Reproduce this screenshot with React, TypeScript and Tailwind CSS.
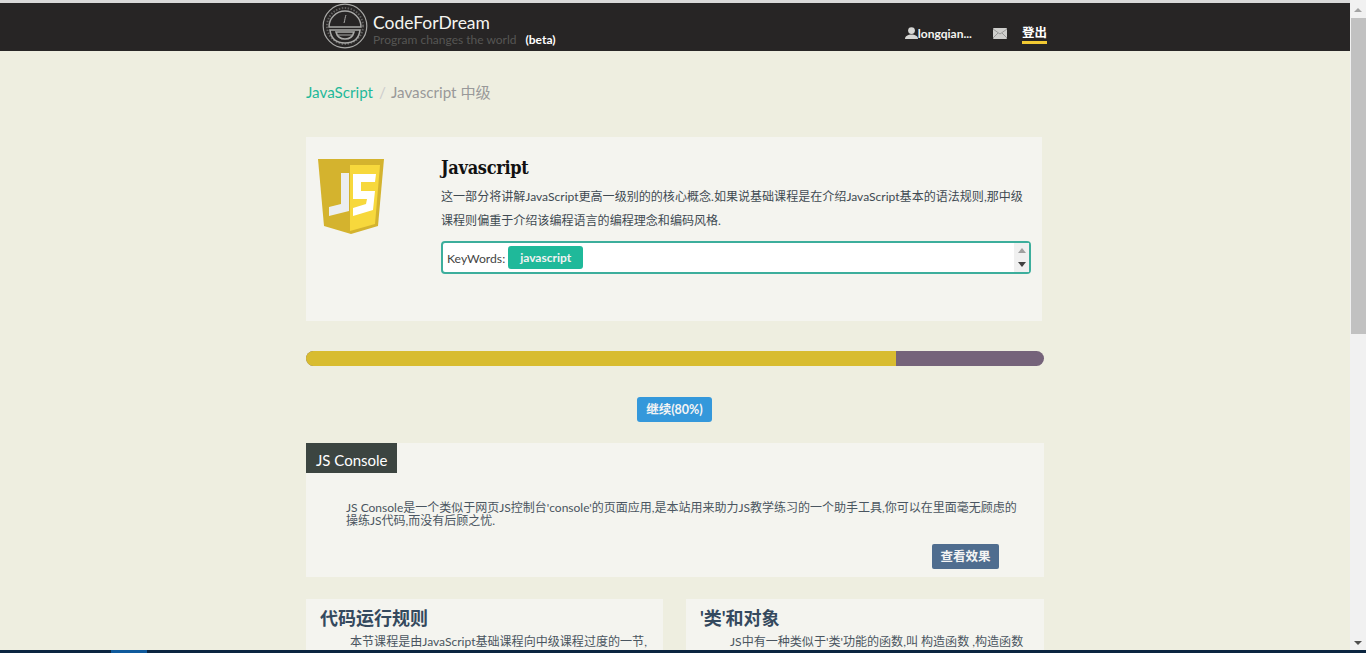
const bodyFont = { fontFamily: "Lato, 'Noto Sans CJK SC', sans-serif" };

function Logo() {
  return (
    <svg width="46" height="46" viewBox="0 0 46 46" fill="none" stroke="#a9a9a7">
      <circle cx="23" cy="23" r="21.8" strokeWidth="1.2" />
      <circle cx="23" cy="23" r="18" strokeWidth="2" strokeDasharray="1.5 1.5" opacity="0.45" />
      <path d="M7 24a16 16 0 0 1 32 0z" strokeWidth="1.4" />
      <path d="M8 27h30c-1 9-7 13-15 13S9 36 8 27z" strokeWidth="1.6" />
      <path d="M14 29h18c-1 4-4 7-9 7s-8-3-9-7z" strokeWidth="1.6" />
      <path d="M16 32h14" strokeWidth="1" />
      <path d="M24 12c-1 2-1 5-2 8" strokeWidth="1" />
    </svg>
  );
}

function JsLogo() {
  return (
    <svg width="66" height="75" viewBox="0 0 66 75">
      <path d="M0 0h66l-6 67-27 8-27-8z" fill="#d4b32e" />
      <path d="M32 6h30l-5 59-25 7z" fill="#f7d83c" />
      <path d="M23 14h8v38l-20 5v-9l12-3z" fill="#eceef0" />
      <path d="M35 15h23l-1 8H43v9h14l-2 19-20 6v-8l13-4 1-5H35z" fill="#fff" />
    </svg>
  );
}

function UserIcon() {
  return (
    <svg width="13" height="12" viewBox="0 0 13 12" fill="#d6d6d4">
      <circle cx="6.5" cy="3.6" r="3.4" />
      <path d="M0 12c0-3 3-4.500 6.500-4.500S13 9 13 12z" />
    </svg>
  );
}

function MailIcon() {
  return (
    <svg width="14" height="11" viewBox="0 0 14 11">
      <rect width="14" height="11" rx="1" fill="#cfcfcd" />
      <path d="M0 1l7 5 7-5M0 10l5-5M14 10L9 5" fill="none" stroke="#8c8c8a" strokeWidth="0.8" />
    </svg>
  );
}

function Header() {
  return (
    <header className="h-[51px] border-t-[3px] border-[#d9d9d9] bg-[#272525]">
      <div className="ml-[322px] flex h-full w-[725px] items-start">
        <Logo />
        <div className="ml-[5px] pt-[8px]">
          <div className="text-[17.5px] leading-[24px] text-[#f4f4f0]">CodeForDream</div>
          <div className="-mt-[3px] flex text-[12px] leading-[15px] text-[#565654]">
            Program changes the world
            <span className="ml-[9px] font-bold text-white">(beta)</span>
          </div>
        </div>
        <nav className="ml-auto flex items-center pt-[21px] text-[12px] font-bold leading-[18px] text-white">
          <span className="-mt-[3px]"><UserIcon /></span>
          <span className="text-[#f4f4f0]">longqian...</span>
          <span className="ml-[21px] -mt-[2px]"><MailIcon /></span>
          <span className="ml-[15px] border-b-[3px] border-[#f1c933] text-[12.500px] leading-[17px]">登出</span>
        </nav>
      </div>
    </header>
  );
}

function KeywordBox() {
  return (
    <div className="mt-[8px] flex h-[33px] w-[590px] items-center justify-between rounded-[4px] border-2 border-[#3cae9c] bg-white pl-1">
      <div className="flex items-center text-[12.200px] text-[#444]">
        <span className="pt-[3px]">KeyWords:</span>
        <span className="ml-[3px] flex h-[23px] w-[75px] items-center justify-center rounded-[3px] bg-[#1fb99a] text-[12px] font-bold text-[#f2f2f2]">
          javascript
        </span>
      </div>
      <div className="flex h-full w-[15px] flex-col items-center justify-between bg-[#f0f0f0] py-[5px]">
        <span className="h-0 w-0 border-x-[4px] border-b-[5px] border-x-transparent border-b-[#a0a0a0]" />
        <span className="h-0 w-0 border-x-[4px] border-t-[5px] border-x-transparent border-t-[#404040]" />
      </div>
    </div>
  );
}

function IntroCard() {
  return (
    <section className="flex h-[184px] w-[736px] bg-[#f4f4ef] pl-[12px] pt-[22px]">
      <JsLogo />
      <div className="ml-[57px]">
        <h1 className="pt-px text-[18px] font-bold leading-[16px] tracking-[-0.300px] text-[#111] font-stretch-condensed" style={{ fontFamily: "'DejaVu Serif', serif" }}>
          Javascript
        </h1>
        <p className="mt-[9px] w-[590px] text-[12.060px] leading-[24px] text-[#3f4a52]">
          这一部分将讲解JavaScript更高一级别的的核心概念.如果说基础课程是在介绍JavaScript基本的语法规则,那中级课程则偏重于介绍该编程语言的编程理念和编码风格.
        </p>
        <KeywordBox />
      </div>
    </section>
  );
}

function Progress() {
  return (
    <div className="mt-[30px] flex h-[15px] w-[738px] overflow-hidden rounded-full bg-[#75637a]">
      <div className="w-[590px] bg-[#d8bc30]" />
    </div>
  );
}

function ConsoleCard() {
  return (
    <section className="mt-[21px] h-[134px] w-[738px] bg-[#f4f4ef]">
      <div className="h-[30px] w-[91px] bg-[#3c4541] pl-[10px] pt-[6px] text-[15px] leading-[22px] text-white">JS Console</div>
      <p className="ml-[40px] mt-[28px] w-[675px] text-[12px] leading-[13px] text-[#4a5560]">
        JS Console是一个类似于网页JS控制台'console'的页面应用,是本站用来助力JS教学练习的一个助手工具,你可以在里面毫无顾虑的操练JS代码,而没有后顾之忧.
      </p>
      <div className="ml-[626px] mt-[17px] flex h-[25px] w-[67px] items-center justify-center rounded-[2px] bg-[#4f6d8f] pt-px text-[12.500px] font-bold text-[#f4f4f4]">
        查看效果
      </div>
    </section>
  );
}

function LessonCard({ title, body, width }: { title: string; body: string; width: string }) {
  return (
    <section className={`h-[60px] overflow-hidden bg-[#f4f4ef] pl-[14px] pt-[7px] ${width}`}>
      <h2 className="text-[18px] font-bold leading-[24px] text-[#34495e]">{title}</h2>
      <p className="mt-[3px] whitespace-nowrap pl-[30px] text-[12.060px] leading-[18px] text-[#4a5560]">{body}</p>
    </section>
  );
}

export default function App() {
  return (
    <div className="relative h-[653px] w-[1366px] overflow-hidden bg-[#eeeee0]" style={bodyFont}>
      <Header />
      <main className="ml-[306px] w-[738px]">
        <div className="flex h-[86px] items-center pb-[3px] text-[15.200px] text-[#999]">
          <span className="text-[#1fb99a]">JavaScript</span>
          <span className="ml-[6px] mr-[5px] text-[#ccc]">/</span>
          <span>Javascript 中级</span>
        </div>
        <IntroCard />
        <Progress />
        <div className="mt-[31px] flex justify-center pr-[1px]">
          <div className="flex h-[25px] w-[75px] items-center justify-center rounded-[3px] bg-[#3498db] pt-px text-[12.500px] font-bold text-[#f4f4f4]">
            继续(80%)
          </div>
        </div>
        <ConsoleCard />
        <div className="mt-[22px] flex gap-[23px]">
          <LessonCard width="w-[357px]" title="代码运行规则" body="本节课程是由JavaScript基础课程向中级课程过度的一节," />
          <LessonCard width="w-[358px]" title="'类'和对象" body="JS中有一种类似于'类'功能的函数,叫 构造函数 ,构造函数" />
        </div>
      </main>
      <div className="absolute right-0 top-0 flex h-[650px] w-[16px] flex-col items-center bg-[#f1f1f1]">
        <span className="mt-[8px] h-0 w-0 border-x-[4px] border-b-[4px] border-x-transparent border-b-[#a3a3a3]" />
        <div className="mt-[6px] h-[316px] w-[15px] bg-[#c1c1c1]" />
        <span className="mt-auto mb-[5px] h-0 w-0 border-x-[4px] border-t-[4px] border-x-transparent border-t-[#505050]" />
      </div>
      <div className="absolute inset-x-0 bottom-0 h-[3px] bg-[#0b2540]">
        <div className="ml-[111px] h-full w-[36px] bg-[#0f5a9c]" />
      </div>
    </div>
  );
}
